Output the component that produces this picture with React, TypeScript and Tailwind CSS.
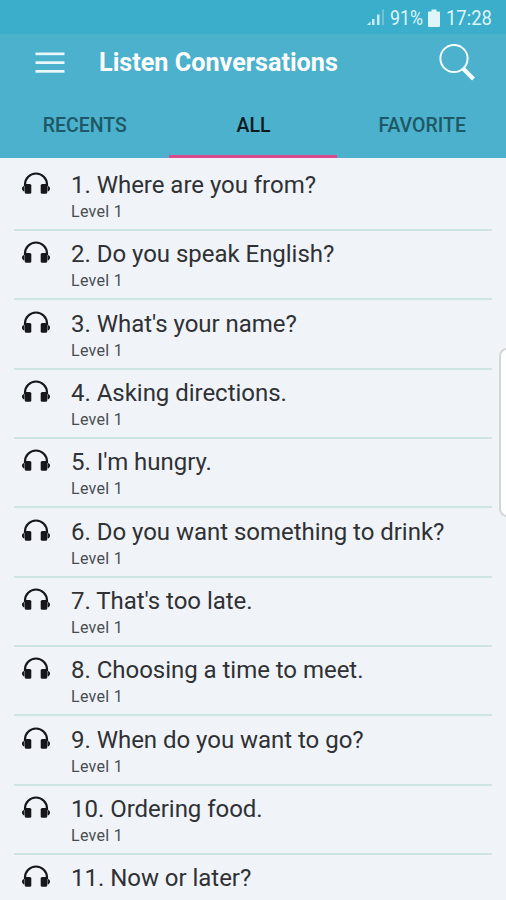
import React from "react";

const conversations = [
  { title: "Where are you from?", level: "Level 1" },
  { title: "Do you speak English?", level: "Level 1" },
  { title: "What's your name?", level: "Level 1" },
  { title: "Asking directions.", level: "Level 1" },
  { title: "I'm hungry.", level: "Level 1" },
  { title: "Do you want something to drink?", level: "Level 1" },
  { title: "That's too late.", level: "Level 1" },
  { title: "Choosing a time to meet.", level: "Level 1" },
  { title: "When do you want to go?", level: "Level 1" },
  { title: "Ordering food.", level: "Level 1" },
  { title: "Now or later?" },
];

const tabs = ["RECENTS", "ALL", "FAVORITE"];

function SignalIcon() {
  return (
    <svg width="18" height="17" viewBox="0 0 18 17" fill="#c9edf4">
      <path d="M0 16l3.500-3.500V16z" />
      <rect x="5" y="10" width="2.500" height="6" />
      <rect x="10" y="5.500" width="2.500" height="10.500" />
      <rect x="15" y="0.5" width="2" height="15.5" opacity="0.35" />
    </svg>
  );
}

function BatteryIcon() {
  return (
    <svg width="12" height="18" viewBox="0 0 12 18" fill="#dff5f9">
      <path d="M3.5 0.5h5v2H11a1 1 0 0 1 1 1V17a1 1 0 0 1-1 1H1a1 1 0 0 1-1-1V3.500a1 1 0 0 1 1-1h2.500z" />
    </svg>
  );
}

function MenuIcon() {
  return (
    <svg width="30" height="22" viewBox="0 0 30 22" fill="#eaf8fb">
      <rect x="0.500" y="0.500" width="29" height="2.700" />
      <rect x="0.500" y="9.300" width="29" height="2.700" />
      <rect x="0.500" y="18" width="29" height="2.700" />
    </svg>
  );
}

function SearchIcon() {
  return (
    <svg width="37" height="38" viewBox="0 0 37 38" fill="none" stroke="#f6fdfe">
      <circle cx="15" cy="14.500" r="13.600" strokeWidth="2" />
      <path d="M23.500 24L34.500 35" strokeWidth="4" />
    </svg>
  );
}

function HeadphonesIcon() {
  return (
    <svg width="28" height="22" viewBox="0 0 28 22" fill="#15171a">
      <path d="M3 14v-1.500a11 11 0 0 1 22 0V14" fill="none" stroke="#15171a" strokeWidth="2.200" />
      <rect x="2.800" y="12" width="6.500" height="9.800" rx="1.500" />
      <rect x="18.700" y="12" width="6.500" height="9.800" rx="1.500" />
      <path d="M2.500 13.800v5.800C1 19.200 0 18.200 0 16.700s1-2.500 2.500-2.900z" />
      <path d="M25.500 13.800v5.800c1.500-.4 2.500-1.400 2.500-2.900s-1-2.500-2.500-2.900z" />
    </svg>
  );
}

export default function App() {
  return (
    <div className="relative h-[900px] w-[506px] overflow-hidden bg-[#f0f4f9] font-[Roboto,sans-serif]">
      {/* Status bar */}
      <div className="flex h-[34px] items-center justify-end bg-[#3aaeca] pt-px pr-[14px] text-[20px] text-[#dff5f9]">
        <SignalIcon />
        <span className="ml-[5px] w-[34px] whitespace-nowrap">
          <span className="inline-block origin-left scale-x-[0.89]">91%</span>
        </span>
        <span className="ml-[4px]">
          <BatteryIcon />
        </span>
        <span className="ml-[6px] w-[46px] whitespace-nowrap">
          <span className="inline-block origin-left scale-x-[0.92]">17:28</span>
        </span>
      </div>

      {/* Toolbar and tabs */}
      <header className="h-[124px] bg-[#4bb1cc]">
        <div className="flex h-[58px] items-center pr-[30px] pl-[35px]">
          <MenuIcon />
          <h1 className="ml-[34px] flex-1 text-[25.200px] font-bold text-white">Listen Conversations</h1>
          <SearchIcon />
        </div>
        <nav className="grid h-[66px] grid-cols-3">
          {tabs.map((tab) => (
            <button
              key={tab}
              className={`border-b-[3px] pt-[4px] pl-px text-[19.500px] font-medium ${
                tab === "ALL" ? "border-[#dc4a8c] text-[#0b1a20]" : "border-transparent text-[#1e5867]"
              }`}
            >
              {tab}
            </button>
          ))}
        </nav>
      </header>

      {/* Conversation list */}
      <ul className="px-[14px] pt-[3.500px]">
        {conversations.map(({ title, level }, index) => (
          <li key={title} className="flex h-[69.350px] border-b-2 border-[#cee4e5] pl-[8px]">
            <div className="pt-[10.500px]">
              <HeadphonesIcon />
            </div>
            <div className="ml-[21px] whitespace-nowrap">
              <p className="mt-[7.500px] text-[24px] leading-[32px] tracking-[-0.030px] text-[#2f3134]">
                {index + 1}. {title}
              </p>
              {level && (
                <p className="text-[16px] leading-[22px] tracking-[0.300px] text-[#4a4d50]">{level}</p>
              )}
            </div>
          </li>
        ))}
      </ul>

      {/* Edge panel handle */}
      <div className="absolute top-[348px] left-[499px] h-[169px] w-[20px] rounded-[8px] border-2 border-[#d3d7db] bg-white" />
    </div>
  );
}
